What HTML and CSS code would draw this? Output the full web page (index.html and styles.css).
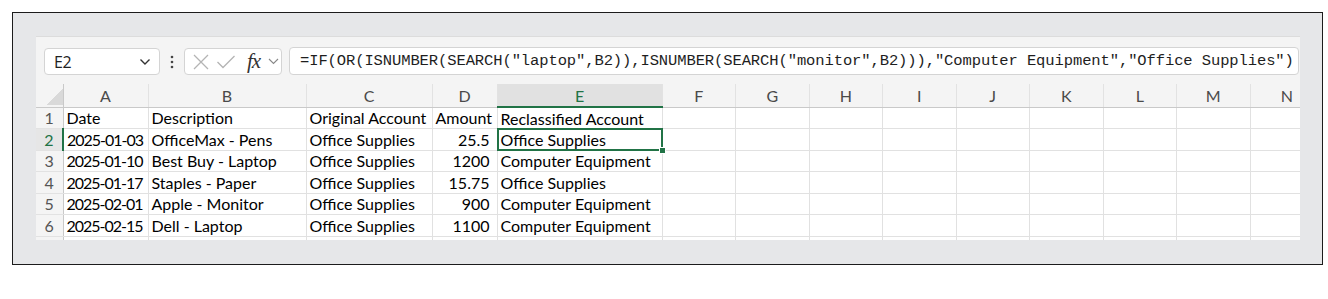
FILE: index.html
```html
<!DOCTYPE html>
<html lang="en">
<head>
  <meta charset="UTF-8" />
  <meta name="viewport" content="width=device-width, initial-scale=1.0" />
  <title>Reclassify accounts</title>
  <link rel="stylesheet" href="styles.css">
</head>
<body>
  <div class="frame">
    <div class="sheet">

      <div class="formula-bar">
        <div class="name-box">
          <span>E2</span>
          <svg width="12" height="8" viewBox="0 0 12 8"><polyline points="1.5,1.5 6,6 10.5,1.5" fill="none" stroke="#333" stroke-width="1.4"/></svg>
        </div>
        <div class="grip">
          <svg width="4" height="14" viewBox="0 0 4 14"><circle cx="2" cy="2" r="1.3" fill="#444"/><circle cx="2" cy="7" r="1.3" fill="#444"/><circle cx="2" cy="12" r="1.3" fill="#444"/></svg>
        </div>
        <div class="fx-box">
          <svg width="18" height="18" viewBox="0 0 18 18"><path d="M2 2 L16 16 M16 2 L2 16" stroke="#b4b4b4" stroke-width="1.3" fill="none"/></svg>
          <svg width="20" height="18" viewBox="0 0 20 18"><polyline points="1.5,9 7,14.5 18.5,3" stroke="#b4b4b4" stroke-width="1.3" fill="none"/></svg>
          <span class="fx">fx</span>
          <svg width="11" height="7" viewBox="0 0 11 7"><polyline points="1,1 5.5,5.5 10,1" fill="none" stroke="#888" stroke-width="1.1"/></svg>
        </div>
        <div class="formula">=IF(OR(ISNUMBER(SEARCH("laptop",B2)),ISNUMBER(SEARCH("monitor",B2))),"Computer Equipment","Office Supplies")</div>
      </div>

      <table class="grid">
        <colgroup>
          <col style="width:27px"><col style="width:85px"><col style="width:158px"><col style="width:126px"><col style="width:65px"><col style="width:165px">
          <col class="blank"><col class="blank"><col class="blank"><col class="blank"><col class="blank"><col class="blank"><col class="blank"><col class="blank"><col class="blank">
        </colgroup>
        <thead>
          <tr>
            <th class="corner"></th>
            <th>A</th><th>B</th><th>C</th><th>D</th><th class="sel-col">E</th>
            <th>F</th><th>G</th><th>H</th><th>I</th><th>J</th><th>K</th><th>L</th><th>M</th><th>N</th>
          </tr>
        </thead>
        <tbody>
          <tr>
            <th>1</th><td>Date</td><td>Description</td><td>Original Account</td><td>Amount</td><td>Reclassified Account</td>
            <td></td><td></td><td></td><td></td><td></td><td></td><td></td><td></td><td></td>
          </tr>
          <tr>
            <th class="sel-row">2</th><td class="date">2025-01-03</td><td>OfficeMax - Pens</td><td>Office Supplies</td><td class="num">25.5</td><td class="active">Office Supplies</td>
            <td></td><td></td><td></td><td></td><td></td><td></td><td></td><td></td><td></td>
          </tr>
          <tr>
            <th>3</th><td class="date">2025-01-10</td><td>Best Buy - Laptop</td><td>Office Supplies</td><td class="num">1200</td><td>Computer Equipment</td>
            <td></td><td></td><td></td><td></td><td></td><td></td><td></td><td></td><td></td>
          </tr>
          <tr>
            <th>4</th><td class="date">2025-01-17</td><td>Staples - Paper</td><td>Office Supplies</td><td class="num">15.75</td><td>Office Supplies</td>
            <td></td><td></td><td></td><td></td><td></td><td></td><td></td><td></td><td></td>
          </tr>
          <tr>
            <th>5</th><td class="date">2025-02-01</td><td>Apple - Monitor</td><td>Office Supplies</td><td class="num">900</td><td>Computer Equipment</td>
            <td></td><td></td><td></td><td></td><td></td><td></td><td></td><td></td><td></td>
          </tr>
          <tr>
            <th>6</th><td class="date">2025-02-15</td><td>Dell - Laptop</td><td>Office Supplies</td><td class="num">1100</td><td>Computer Equipment</td>
            <td></td><td></td><td></td><td></td><td></td><td></td><td></td><td></td><td></td>
          </tr>
          <tr>
            <th></th><td></td><td></td><td></td><td></td><td></td>
            <td></td><td></td><td></td><td></td><td></td><td></td><td></td><td></td><td></td>
          </tr>
        </tbody>
      </table>

    </div>
  </div>
</body>
</html>
```

FILE: styles.css
```css
body {
  margin: 0;
  background-color: #ffffff;
  font-family: Lato, "Liberation Sans", sans-serif;
}

.frame {
  margin: 12px 0 0 12px;
  width: 1311px;
  height: 253px;
  box-sizing: border-box;
  border: 1px solid #1c1c1c;
  background-color: #e6e7e9;
  padding: 23px 0 0 23px;
}

.sheet {
  width: 1264px;
  height: 204px;
  overflow: hidden;
  background-color: #ffffff;
}

/* formula bar */

.formula-bar {
  display: flex;
  align-items: flex-start;
  height: 48px;
  box-sizing: border-box;
  padding: 11px 1px 0 8px;
  background-color: #f4f4f4;
  border-top: 1px solid #dcdcdc;
}

.name-box,
.fx-box,
.formula {
  height: 27px;
  box-sizing: border-box;
  background-color: #ffffff;
  border: 1px solid #d4d4d4;
  border-radius: 4px;
  display: flex;
  align-items: center;
}

.name-box {
  width: 116px;
  justify-content: space-between;
  padding: 0 8px 0 9px;
  font-family: "Open Sans", sans-serif;
  font-size: 16px;
  letter-spacing: -0.5px;
  color: #222;
}

.grip {
  width: 24px;
  height: 27px;
  display: flex;
  align-items: center;
  justify-content: center;
}

.fx-box {
  width: 98px;
  padding-left: 7px;
  gap: 6px;
}

.fx {
  font-family: "Liberation Serif", serif;
  font-style: italic;
  font-size: 21px;
  color: #333;
  margin-left: 5px;
  margin-right: 2px;
  letter-spacing: -1px;
}

.formula {
  flex: 1;
  height: 28px;
  margin-left: 7px;
  margin-top: -1px;
  padding-left: 10px;
  font-family: "Liberation Mono", monospace;
  font-size: 15.5px;
  letter-spacing: -0.1px;
  color: #1e1e1e;
  white-space: nowrap;
  overflow: hidden;
}

/* grid */

.grid {
  border-collapse: collapse;
  table-layout: fixed;
  width: 1214px;
}

.grid col.blank {
  width: 73.5px;
}

.grid th,
.grid td {
  padding: 0;
  white-space: nowrap;
  overflow: hidden;
  font-size: 16px;
  font-weight: normal;
}

.grid thead tr {
  height: 23px;
}

.grid tbody tr {
  height: 21.5px;
}

.grid thead th {
  background-color: #f4f4f4;
  color: #4a4a4a;
  text-align: center;
  border-right: 1px solid #e2e2e2;
  border-bottom: 1px solid #c9c9c9;
}

.grid thead th.corner {
  background: #f4f4f4 linear-gradient(to top left, #d9d9d9 50%, transparent 50%) no-repeat right 0 bottom 2px / 16px 16px;
  border-right: 1px solid #c9c9c9;
}

.grid tbody th {
  background-color: #f4f4f4;
  color: #555;
  text-align: center;
  border-right: 1px solid #c9c9c9;
  border-bottom: 1px solid #e2e2e2;
}

.grid td {
  color: #000;
  padding-left: 3px;
  border-right: 1px solid #e1e1e1;
  border-bottom: 1px solid #e1e1e1;
}

.grid td.date {
  letter-spacing: -1px;
}

.grid td.num {
  text-align: right;
  padding: 0 7px 0 0;
}

.grid thead th.sel-col {
  background-color: #e1e1e1;
  color: #217346;
  border-bottom: 2px solid #217346;
}

.grid tbody th.sel-row {
  background-color: #e6e6e6;
  color: #217346;
  border-right: 2px solid #217346;
}

.grid td.active {
  position: relative;
  overflow: visible;
}

.grid td.active::before {
  content: "";
  position: absolute;
  inset: -1px -1px -1px -1px;
  border: 2px solid #217346;
}

.grid td.active::after {
  content: "";
  position: absolute;
  right: -4px;
  bottom: -4px;
  width: 5px;
  height: 5px;
  background-color: #217346;
  border: 1px solid #ffffff;
}
```
